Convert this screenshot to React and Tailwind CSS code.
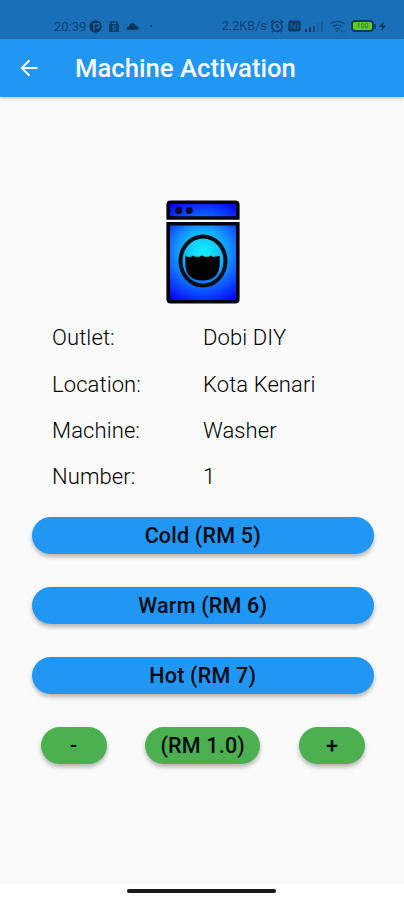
const details = [
  { label: 'Outlet:',   value: 'Dobi DIY' },
  { label: 'Location:', value: 'Kota Kenari' },
  { label: 'Machine:',  value: 'Washer' },
  { label: 'Number:',   value: '1' },
]

const programs = ['Cold (RM 5)', 'Warm (RM 6)', 'Hot (RM 7)']

const BTN = 'h-[37px] pt-px rounded-full text-[21.5px] leading-none font-medium tracking-[0.2px] text-[#040b12] shadow-[0_3px_4px_rgba(0,0,0,0.28)]'

function StatusBar() {
  return (
    <div className="h-[39px] bg-[#1a70b8] pt-[13px] pl-[54px] pr-[18px] flex items-center text-[#0e4170]">
      <span className="text-[13px] leading-none w-[33px] whitespace-nowrap">20:39</span>
      <svg className="ml-[2px] w-[13px] h-[13px]" viewBox="0 0 13 13">
        <circle cx="6.5" cy="6.5" r="6.2" fill="#0b3358" />
        <path d="M5 10.5V3.7h5v4H7" fill="none" stroke="#1a70b8" strokeWidth="1.4" />
      </svg>
      <svg className="ml-[6px] w-[12px] h-[13px]" viewBox="0 0 12 13">
        <path d="M1 4h10v8H1z" fill="#0b3e68" />
        <path d="M3 4V2h6v2" fill="none" stroke="#0b3e68" strokeWidth="1.4" />
        <path d="M8 6H4.8v2h2.7v2H4" fill="none" stroke="#1a70b8" strokeWidth="0.9" />
      </svg>
      <svg className="ml-[6px] w-[13px] h-[13px]" viewBox="0 0 13 13">
        <path d="M1.5 9.8Q0 9.5.6 8 1 6.8 3.2 6.5 3.5 3.3 6.5 2.7 9 3.3 9.5 5.8q3 .2 3.2 2.6 0 1.4-1.5 1.4z" fill="#0b3358" />
      </svg>
      <span className="ml-[11px] w-[2px] h-[2px] rounded-full bg-[#0f4c7f]" />

      <span className="ml-auto text-[12.5px] leading-none tracking-[0.1px] whitespace-nowrap">2.2KB/s</span>
      <svg className="ml-[3px] w-[14px] h-[14px]" viewBox="0 0 14 14" fill="none" stroke="#0d3d69" strokeWidth="1.5">
        <circle cx="7" cy="7.5" r="5" />
        <path d="M1 3.7 3.7 1.3M13 3.7l-2.7-2.4M7 5v3h2M3 12l-1 1.2M11 12l1 1.2" />
      </svg>
      <svg className="ml-[4px] w-[13px] h-[12px]" viewBox="0 0 13 12">
        <rect x=".3" y=".5" width="12.4" height="11" rx="2" fill="#0d3d69" />
        <path d="M3 9V3.5l4 5.5V3.5M9.5 3q1.5 3 0 6" fill="none" stroke="#1a70b8" strokeWidth="0.8" />
      </svg>
      <svg className="ml-[4px] w-[18px] h-[12px]" viewBox="0 0 18 12">
        <path d="M0 9h2v3H0zM4 7.5h2V12H4z" fill="#0b3358" />
        <path d="M8 5.5h2V12H8z" fill="#124d80" />
        <path d="M12 3h2v9h-2zM16 1h2v11h-2z" fill="#17609e" />
      </svg>
      <svg className="ml-[6px] w-[17px] h-[13px]" viewBox="0 0 17 13" fill="none" stroke="#114a7a" strokeWidth="1.3">
        <path d="M1 4q7.5-5.5 15 0M3.5 6.8q5-4 10 0M6 9.3q2.5-2 5 0" />
        <path d="M7.3 10.8h2l-1 1.4zM12.5 10v2.5M15 10v2.5" strokeWidth="1" />
      </svg>
      <div className="ml-[5px] flex items-center">
        <div className="w-[23px] h-[12px] rounded-[4px] border-2 border-[#0c3c65] bg-[#62c92b] flex items-center justify-center">
          <span className="text-[7px] leading-none font-bold text-[#3c8c31]">100</span>
        </div>
        <div className="w-[2px] h-[5px] rounded-r-sm bg-[#0c3c65]" />
      </div>
      <svg className="ml-[3px] w-[7px] h-[11px]" viewBox="0 0 7 11">
        <path d="M4.5.8 0 6h3L2.3 10 7 4.8H4z" fill="#0b3358" />
      </svg>
    </div>
  )
}

function Washer() {
  return (
    <svg className="w-[74px] h-[104px] ml-[165.5px]" viewBox="0 0 74 104">
      <defs>
        <radialGradient id="body" gradientUnits="userSpaceOnUse" cx="37" cy="52" r="57">
          <stop offset="0" stopColor="#11f0ff" />
          <stop offset="0.25" stopColor="#12cdfb" />
          <stop offset="0.5" stopColor="#1488ff" />
          <stop offset="0.75" stopColor="#0b42ff" />
          <stop offset="1" stopColor="#0500f0" />
        </radialGradient>
      </defs>
      {/* control panel */}
      <path d="M2.2 18V4.7Q2.2 2.2 4.7 2.2h64.6q2.5 0 2.5 2.5V18z" fill="url(#body)" stroke="#03030f" strokeWidth="3.6" />
      <circle cx="12.7" cy="10.5" r="3.5" fill="#030330" />
      <circle cx="23.3" cy="10.5" r="3.5" fill="#030330" />
      {/* door and water */}
      <path d="M2.2 23.7h69.600v75.600q0 2.500-2.500 2.500H4.700q-2.500 0-2.500-2.500z" fill="url(#body)" stroke="#03030f" strokeWidth="3.600" />
      <ellipse cx="37" cy="61" rx="22.5" ry="24.500" fill="none" stroke="#031018" strokeWidth="4" />
      <path d="M19.300 56q3.500 1.200 6 .8 1.500-2.300 3.500 0h5.200q2-2.600 4 0h5q1.500-2.300 3.500 0 3 .2 7.200-.8v7q0 17.500-17.200 17.500T19.300 63z" fill="#000" />
    </svg>
  )
}

export default function App() {
  return (
    <div className="w-[404px] h-[900px] bg-[#fafafa] flex flex-col font-['Roboto',sans-serif] overflow-hidden">
      <StatusBar />

      <header className="h-[58px] shrink-0 bg-[#2196f3] flex items-center pl-[20px] shadow-[0_1px_4px_rgba(0,0,0,0.25)]">
        <svg className="w-[18px] h-[18px]" viewBox="0 0 18 18" fill="none" stroke="#f4faff" strokeWidth="2">
          <path d="M17.5 9H2M9.5 1.3 1.8 9l7.7 7.7" />
        </svg>
        <h1 className="ml-[37px] pt-px text-[25.7px] leading-none font-medium text-[#f6fbff]">Machine Activation</h1>
      </header>

      <main className="flex-1 pt-[103px]">
        <Washer />

        <dl className="mt-[11px] pl-[52px]">
          {details.map(d => (
            <div key={d.label} className="h-[46.4px] flex items-center text-[22px] leading-none font-light tracking-[0.1px] text-black">
              <dt className="w-[151px]">{d.label}</dt>
              <dd>{d.value}</dd>
            </div>
          ))}
        </dl>

        <div className="mt-[16px] ml-[31.5px] w-[342.5px] flex flex-col gap-[33px]">
          {programs.map(p => (
            <button key={p} className={`${BTN} bg-[#2196f3]`}>{p}</button>
          ))}
          <div className="flex justify-between px-[9px]">
            <button className={`${BTN} w-[66px] bg-[#4caf50]`}>-</button>
            <button className={`${BTN} w-[115px] bg-[#4caf50]`}>(RM 1.0)</button>
            <button className={`${BTN} w-[66px] bg-[#4caf50]`}>+</button>
          </div>
        </div>
      </main>

      {/* gesture bar */}
      <footer className="h-[16.5px] shrink-0 bg-white pt-[5px] pl-[127px]">
        <div className="w-[149px] h-[4px] rounded-full bg-[#191919]" />
      </footer>
    </div>
  )
}
